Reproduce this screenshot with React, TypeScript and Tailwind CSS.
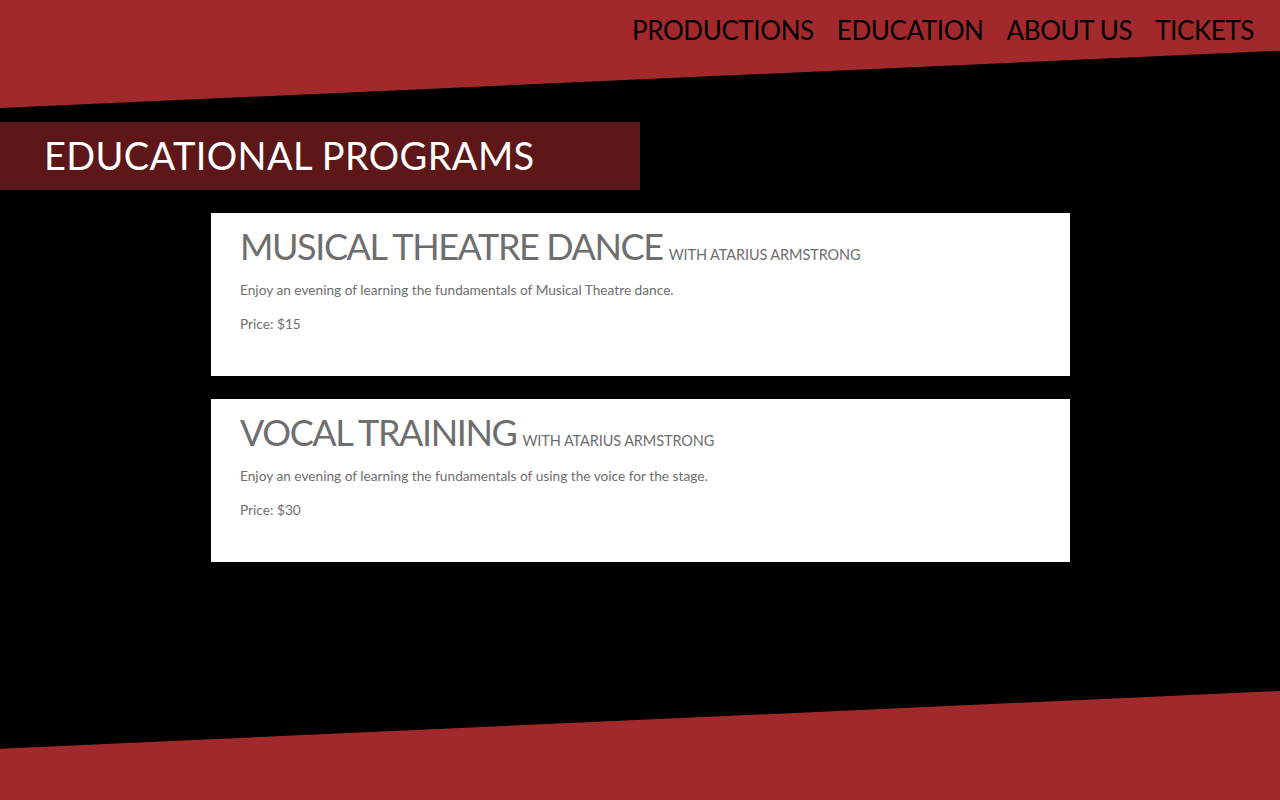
const programs = [
  {
    title: "MUSICAL THEATRE DANCE",
    teacher: "WITH ATARIUS ARMSTRONG",
    text: "Enjoy an evening of learning the fundamentals of Musical Theatre dance.",
    price: "$15",
  },
  {
    title: "VOCAL TRAINING",
    teacher: "WITH ATARIUS ARMSTRONG",
    text: "Enjoy an evening of learning the fundamentals of using the voice for the stage.",
    price: "$30",
  },
]

export default function App() {
  return (
    <div className="h-[800px] bg-black flex flex-col overflow-hidden font-['Lato',sans-serif]">
      <header className="h-[108px] bg-[#a1292b] [clip-path:polygon(0_0,100%_0,100%_47%,0_100%)] shrink-0">
        <nav className="flex justify-end gap-[23px] pr-[26px] pt-[13px] text-[26px] tracking-[-0.4px] text-black leading-[34px]">
          <a>PRODUCTIONS</a>
          <a>EDUCATION</a>
          <a>ABOUT US</a>
          <a>TICKETS</a>
        </nav>
      </header>

      <div className="mt-[14px] w-[640px] h-[68px] bg-[#5d1718] flex items-center pl-[44px] pb-[3px]">
        <h1 className="text-white text-[38px] leading-none tracking-[0.35px]">EDUCATIONAL PROGRAMS</h1>
      </div>

      <main className="mt-[23px] ml-[211px] w-[859px] flex flex-col gap-[23px]">
        {programs.map(p => (
          <section key={p.title} className="bg-white h-[163px] px-[29px] pt-[13px] text-[#6e6e6e]">
            <h2 className="flex items-baseline gap-[6px]">
              <span className="text-[36px] leading-[40px] tracking-[-1.4px]">{p.title}</span>
              <span className="text-[14.5px] tracking-[-0.1px]">{p.teacher}</span>
            </h2>
            <p className="text-[13.7px] mt-[14px] leading-[20px]">{p.text}</p>
            <p className="text-[13.7px] mt-[14px] leading-[20px]">Price: {p.price}</p>
          </section>
        ))}
      </main>

      <footer className="mt-auto h-[109px] bg-[#a1292b] [clip-path:polygon(0_53%,100%_0,100%_100%,0_100%)] shrink-0" />
    </div>
  )
}
